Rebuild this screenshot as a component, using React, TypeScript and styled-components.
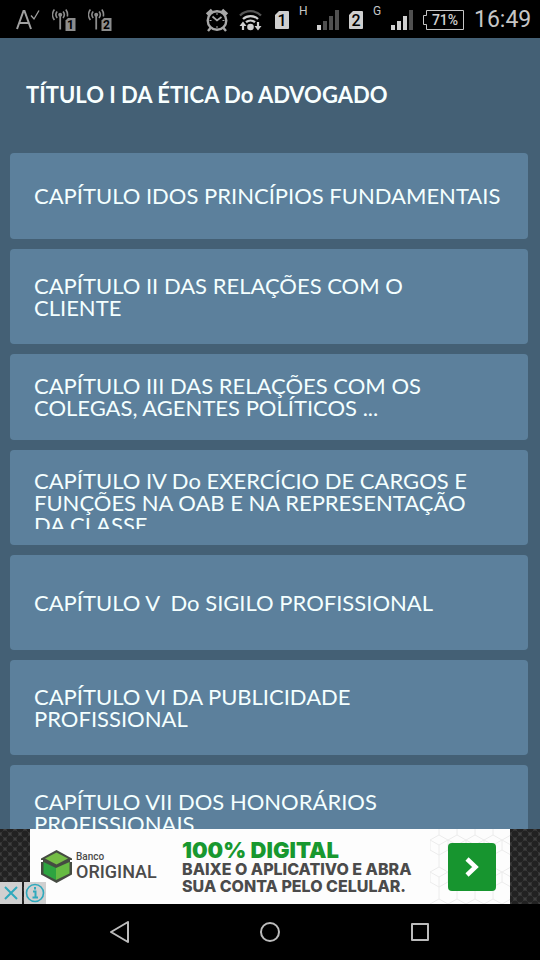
import React from "react";
import styled, { createGlobalStyle } from "styled-components";

const GlobalStyle = createGlobalStyle`
  * { box-sizing: border-box; }
  body { margin: 0; background: #000; }
  button { border: 0; padding: 0; background: none; font: inherit; color: inherit; cursor: pointer; }
`;

const Screen = styled.div`
  display: flex;
  flex-direction: column;
  height: 100vh;
  overflow: hidden;
  background: #446075;
  font-family: Lato, sans-serif;
`;

const StatusBar = styled.header`
  display: flex;
  flex: none;
  justify-content: space-between;
  align-items: center;
  height: 38px;
  padding: 0 9px 0 16px;
  background: #000;
  color: #c6c6c6;
  font-family: Roboto, sans-serif;
`;

const StatusGroup = styled.div<{ $gap: number }>`
  display: flex;
  align-items: center;
  gap: ${(p) => p.$gap}px;
  padding-top: 2px;
  svg { display: block; flex: none; }
`;

const Network = styled.span`
  align-self: flex-start;
  width: 8px;
  font-size: 12px;
  line-height: 10px;
`;

const Clock = styled.time`
  width: 57px;
  font-size: 23px;
  line-height: 28px;
  white-space: nowrap;
  text-align: right;
`;

const Content = styled.main`
  flex: 1;
  min-height: 0;
  overflow: hidden;
`;

const Title = styled.h1`
  margin: 0;
  padding: 46px 26px 47px;
  color: #f8ffff;
  font-size: 22px;
  font-weight: 700;
  line-height: 22px;
  white-space: nowrap;
`;

const ChapterList = styled.ul`
  display: flex;
  flex-direction: column;
  gap: 10px;
  margin: 0;
  padding: 0 12px 10px 10px;
  list-style: none;
`;

const ChapterButton = styled.button<{ $compact?: boolean; $clipped?: boolean }>`
  display: flex;
  align-items: ${(p) => (p.$clipped ? "flex-start" : "center")};
  width: 100%;
  min-height: ${(p) => (p.$compact ? 86 : 95)}px;
  padding: ${(p) => (p.$clipped ? "20px 24px 16px" : "16px 24px")};
  border-radius: 4px;
  background: #5c809c;
  color: #f4ffff;
  text-align: left;
`;

const ChapterLabel = styled.span<{ $clipped?: boolean }>`
  display: block;
  font-size: 22px;
  line-height: 22px;
  white-space: pre;
  max-height: ${(p) => (p.$clipped ? "59px" : "none")};
  overflow: ${(p) => (p.$clipped ? "hidden" : "visible")};
`;

const AdStrip = styled.aside`
  position: relative;
  display: flex;
  flex: none;
  justify-content: center;
  background-color: #404040;
  background-image: radial-gradient(circle, #222 0 3px, transparent 4px),
    radial-gradient(circle, #222 0 3px, transparent 4px);
  background-size: 10px 10px;
  background-position: 0 0, 5px 5px;
`;

const AdBanner = styled.a`
  position: relative;
  display: flex;
  align-items: center;
  width: 480px;
  height: 75px;
  padding: 0 14px 0 11px;
  background: #fdfdfd;
  color: #4b4b4b;
  text-decoration: none;
`;

const AdPattern = styled.svg`
  position: absolute;
  top: 0;
  right: 0;
`;

const Brand = styled.div`
  display: flex;
  align-items: center;
  gap: 4px;
  width: 141px;
  font-family: Roboto, sans-serif;
  font-weight: 500;
`;

const BrandSmall = styled.div`
  font-size: 10px;
  line-height: 10px;
`;

const BrandName = styled.div`
  font-size: 18px;
  line-height: 20px;
`;

const AdCopy = styled.div`
  flex: 1;
  font-family: Inter, sans-serif;
  font-weight: 800;
  font-size: 16px;
  line-height: 17px;
  white-space: nowrap;
`;

const AdHeadline = styled.div`
  color: #18982f;
  font-size: 22px;
  font-weight: 900;
  line-height: 22px;
`;

const AdArrow = styled.span`
  position: relative;
  display: grid;
  place-items: center;
  width: 48px;
  height: 48px;
  border-radius: 4px;
  background: #17952f;
`;

const AdControls = styled.div`
  position: absolute;
  left: 0;
  bottom: 0;
  display: flex;
  gap: 2px;
`;

const AdControl = styled.button`
  display: grid;
  place-items: center;
  width: 22px;
  height: 22px;
  background: #d0d0d0;
`;

const NavBar = styled.nav`
  display: flex;
  flex: none;
  justify-content: center;
  height: 56px;
  background: #000;
`;

const NavButton = styled.button`
  display: grid;
  place-items: center;
  width: 150px;
`;

const Antenna = ({ sim }: { sim: string }) => (
  <svg width="24" height="24" viewBox="0 0 24 24" fill="none" stroke="#8c8c8c" strokeWidth="1.6" aria-label={`SIM ${sim}`}>
    <path d="M5.2 3.6a5 5 0 0 0 0 6.4M11 3.6a5 5 0 0 1 0 6.4M2.4 1.5a8.5 8.5 0 0 0 0 10.5M13.8 1.5a8.5 8.5 0 0 1 1.5 7" />
    <circle cx="8.2" cy="6.7" r="2" fill="#8c8c8c" stroke="none" />
    <path d="M8.2 7v14.5" strokeWidth="1.8" />
    <path d="M16 10h7.5v13h-10V12.500z" fill="#8c8c8c" stroke="none" />
    <text x="18.5" y="21" fill="#000" stroke="none" fontSize="12" fontWeight="700" textAnchor="middle">{sim}</text>
  </svg>
);

const SimCard = ({ sim }: { sim: string }) => (
  <svg width="14" height="18" viewBox="0 0 14 18" aria-label={`SIM ${sim}`}>
    <path d="M4 0h9a1 1 0 0 1 1 1v16a1 1 0 0 1-1 1H1a1 1 0 0 1-1-1V4z" fill="#cfcfcf" />
    <text x="7" y="15" fill="#000" fontSize="16" fontWeight="500" textAnchor="middle">{sim}</text>
  </svg>
);

const Signal = ({ level }: { level: number }) => (
  <svg width="22" height="20" viewBox="0 0 22 20" aria-label="Sinal">
    {[5, 9, 14, 20].map((h, i) => (
      <rect key={h} x={i * 6} y={20 - h} width="4" height={h} fill={i < level ? "#d0d0d0" : "#505050"} />
    ))}
  </svg>
);

const chapters: { text: string; compact?: boolean; clipped?: boolean }[] = [
  { text: "CAPÍTULO IDOS PRINCÍPIOS FUNDAMENTAIS", compact: true },
  { text: "CAPÍTULO II DAS RELAÇÕES COM O\nCLIENTE" },
  { text: "CAPÍTULO III DAS RELAÇÕES COM OS\nCOLEGAS, AGENTES POLÍTICOS ...", compact: true },
  { text: "CAPÍTULO IV Do EXERCÍCIO DE CARGOS E\nFUNÇÕES NA OAB E NA REPRESENTAÇÃO\nDA CLASSE", clipped: true },
  { text: "CAPÍTULO V  Do SIGILO PROFISSIONAL" },
  { text: "CAPÍTULO VI DA PUBLICIDADE\nPROFISSIONAL" },
  { text: "CAPÍTULO VII DOS HONORÁRIOS\nPROFISSIONAIS" },
];

export default function App() {
  return (
    <Screen>
      <GlobalStyle />
      <StatusBar>
        <StatusGroup $gap={12}>
          <svg width="24" height="22" viewBox="0 0 24 22" fill="none" stroke="#a0a0a0" aria-label="Corretor">
            <path d="M1 20L7.500 2h1L15 20M3.500 14h9" strokeWidth="2" />
            <path d="M15 6.500l3 3.500 5-8.500" strokeWidth="1.300" />
          </svg>
          <Antenna sim="1" />
          <Antenna sim="2" />
        </StatusGroup>
        <StatusGroup $gap={10}>
          <svg width="24" height="24" viewBox="0 0 24 24" fill="none" stroke="#a8a8a8" aria-label="Alarme">
            <circle cx="12" cy="12.500" r="9.300" strokeWidth="2.400" />
            <path d="M2 6.500L7 2M22 6.500L17 2" strokeWidth="3.400" />
            <path d="M5.500 20L3 23M18.500 20L21 23" strokeWidth="2.400" />
            <path d="M7.500 8.500l4.500 4 4.500-3.500" strokeWidth="1.700" />
            <path d="M12 5v2M12 18v2M4.500 12.500h2M17.500 12.500h2" strokeWidth="1" />
          </svg>
          <svg width="26" height="22" viewBox="0 0 26 22" fill="none" stroke="#d0d0d0" strokeWidth="2.300" aria-label="Wi-Fi">
            <path d="M1 6.500a15 15 0 0 1 21 0" stroke="#555" />
            <path d="M4 10a11 11 0 0 1 15 0M7 13.200a7 7 0 0 1 9 0" />
            <circle cx="11.500" cy="18" r="3.300" fill="#d0d0d0" stroke="none" />
            <path d="M4 21v-6M19 13v6" strokeWidth="2.200" />
            <path d="M.5 17L4 12.500 7.500 17zM15.500 17l3.500 4.500 3.500-4.500z" fill="#d0d0d0" stroke="none" />
          </svg>
          <SimCard sim="1" />
          <Network>H</Network>
          <Signal level={1} />
          <SimCard sim="2" />
          <Network>G</Network>
          <Signal level={3} />
          <svg width="41" height="20" viewBox="0 0 41 20" aria-label="Bateria 71%">
            <path d="M3.500.5h37v19h-37v-5h-3v-9h3z" fill="none" stroke="#c6c6c6" />
            <text x="22" y="15" fill="#d0d0d0" fontSize="14" fontWeight="500" textAnchor="middle">71%</text>
          </svg>
          <Clock>16:49</Clock>
        </StatusGroup>
      </StatusBar>

      <Content>
        <Title>TÍTULO I DA ÉTICA Do ADVOGADO</Title>
        <ChapterList>
          {chapters.map((c) => (
            <li key={c.text}>
              <ChapterButton type="button" $compact={c.compact} $clipped={c.clipped}>
                <ChapterLabel $clipped={c.clipped}>{c.text}</ChapterLabel>
              </ChapterButton>
            </li>
          ))}
        </ChapterList>
      </Content>

      <AdStrip>
        <AdBanner href="#original">
          <AdPattern width="80" height="75" aria-hidden="true">
            <defs>
              <pattern id="cubes" width="18" height="32" patternUnits="userSpaceOnUse">
                <path d="M9 0v6M9 6l9 5v10l-9 5-9-5V11zM0 11l9 5 9-5M9 16v10M9 26v6" fill="none" stroke="#ececec" />
              </pattern>
            </defs>
            <rect width="80" height="75" fill="url(#cubes)" />
          </AdPattern>
          <Brand>
            <svg width="31" height="33" viewBox="0 0 31 33" aria-hidden="true">
              <path d="M15.500 0L31 8.500v16L15.500 33 0 24.500v-16z" fill="#454b42" />
              <path d="M15.500 2.500L27 8.500l-11.500 6L4 8.500z" fill="#74bd45" />
              <path d="M2.500 12l12.500 6v12l-12.500-6.500z" fill="#2da440" />
              <path d="M28.500 12L15 18v12l13.500-6.500z" fill="#66bb42" />
              <path d="M0 11h2M29 11h2" stroke="#fdfdfd" strokeWidth="2" />
            </svg>
            <div>
              <BrandSmall>Banco</BrandSmall>
              <BrandName>ORIGINAL</BrandName>
            </div>
          </Brand>
          <AdCopy>
            <AdHeadline>100% DIGITAL</AdHeadline>
            <div>BAIXE O APLICATIVO E ABRA</div>
            <div>SUA CONTA PELO CELULAR.</div>
          </AdCopy>
          <AdArrow>
            <svg width="14" height="20" viewBox="0 0 14 20" fill="none" aria-hidden="true">
              <path d="M2 2l8.500 8L2 18" stroke="#fff" strokeWidth="4.500" />
            </svg>
          </AdArrow>
        </AdBanner>
        <AdControls>
          <AdControl type="button" aria-label="Fechar anúncio">
            <svg width="16" height="16" viewBox="0 0 16 16">
              <path d="M2 2l12 12M14 2L2 14" stroke="#2fa9bd" strokeWidth="2" />
            </svg>
          </AdControl>
          <AdControl type="button" aria-label="Sobre o anúncio">
            <svg width="20" height="20" viewBox="0 0 20 20" fill="none" stroke="#2fa9bd">
              <circle cx="10" cy="10" r="8.500" strokeWidth="1.600" />
              <path d="M10 4v2.500M8 8.500h2.500v6M7.500 14.500h5.500" strokeWidth="2" />
            </svg>
          </AdControl>
        </AdControls>
      </AdStrip>

      <NavBar>
        <NavButton type="button" aria-label="Voltar">
          <svg width="22" height="22" viewBox="0 0 22 22" fill="none" stroke="#bcbcbc" strokeWidth="2" strokeLinejoin="round">
            <path d="M19 1v20L2 11z" />
          </svg>
        </NavButton>
        <NavButton type="button" aria-label="Início">
          <svg width="22" height="22" viewBox="0 0 22 22" fill="none" stroke="#bcbcbc" strokeWidth="2">
            <circle cx="11" cy="11" r="9" />
          </svg>
        </NavButton>
        <NavButton type="button" aria-label="Recentes">
          <svg width="22" height="22" viewBox="0 0 22 22" fill="none" stroke="#bcbcbc" strokeWidth="2" strokeLinejoin="round">
            <rect x="3" y="3" width="16" height="16" />
          </svg>
        </NavButton>
      </NavBar>
    </Screen>
  );
}
